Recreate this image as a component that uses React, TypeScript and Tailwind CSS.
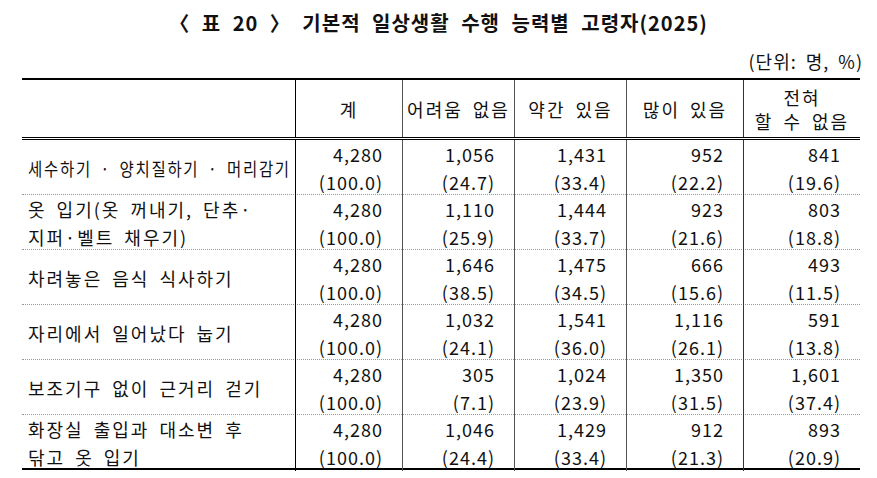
const rows = [
  { label: ["세수하기 · 양치질하기 · 머리감기"], squeeze: true, v: ["4,280", "1,056", "1,431", "952", "841"], p: ["100.0", "24.7", "33.4", "22.2", "19.6"] },
  { label: ["옷 입기(옷 꺼내기, 단추·", "지퍼·벨트 채우기)"], v: ["4,280", "1,110", "1,444", "923", "803"], p: ["100.0", "25.9", "33.7", "21.6", "18.8"] },
  { label: ["차려놓은 음식 식사하기"], v: ["4,280", "1,646", "1,475", "666", "493"], p: ["100.0", "38.5", "34.5", "15.6", "11.5"] },
  { label: ["자리에서 일어났다 눕기"], v: ["4,280", "1,032", "1,541", "1,116", "591"], p: ["100.0", "24.1", "36.0", "26.1", "13.8"] },
  { label: ["보조기구 없이 근거리 걷기"], v: ["4,280", "305", "1,024", "1,350", "1,601"], p: ["100.0", "7.1", "23.9", "31.5", "37.4"] },
  { label: ["화장실 출입과 대소변 후", "닦고 옷 입기"], v: ["4,280", "1,046", "1,429", "912", "893"], p: ["100.0", "24.4", "33.4", "21.3", "20.9"] },
];

const colBorder = ["border-l border-black", "border-l border-[#555]", "border-l border-[#555]", "border-l border-[#555]", "border-l border-[#333]"];

export default function App() {
  return (
    <div className="w-[877px] h-[478px] bg-white text-[#111] font-['Noto_Sans_CJK_KR',sans-serif] overflow-hidden">
      <div className="pt-[8px] text-center text-[20px] font-bold leading-[30px] tracking-[1px] [word-spacing:6px]">
        〈 표 20 〉 기본적 일상생활 수행 능력별 고령자(2025)
      </div>
      <div className="mt-[11px] pr-[14px] text-right text-[18px] leading-[24px] tracking-[1px] [word-spacing:4px]">
        (단위: 명, %)
      </div>
      <div className="ml-[22px] mt-[5px] w-[838px] border-t-2 border-black">
        {/* header */}
        <div className="grid grid-cols-[273px_107px_112px_112px_117px_117px] h-[60px] border-b-[3px] border-double border-black text-[18px] leading-[24px] tracking-[2px] [word-spacing:4px]">
          <div />
          <div className={`${colBorder[0]} flex items-center justify-center`}>계</div>
          <div className={`${colBorder[1]} flex items-center justify-center`}>어려움 없음</div>
          <div className={`${colBorder[2]} flex items-center justify-center`}>약간 있음</div>
          <div className={`${colBorder[3]} flex items-center justify-center`}>많이 있음</div>
          <div className={`${colBorder[4]} flex flex-col items-center justify-center`}>
            <span>전혀</span>
            <span>할 수 없음</span>
          </div>
        </div>
        {rows.map((r, i) => (
          <div
            key={i}
            className={`grid grid-cols-[273px_107px_112px_112px_117px_117px] h-[55px] text-[18px] leading-[28px] ${
              i < rows.length - 1 ? "border-b border-dotted border-[#999]" : "border-b-2 border-black"
            }`}
          >
            <div className="flex flex-col justify-center items-start pl-[6px] tracking-[2px] [word-spacing:4px]">
              {r.label.map((l, j) => (
                <span key={j} className={r.squeeze ? "whitespace-nowrap origin-left scale-x-[0.86]" : "whitespace-nowrap"}>
                  {l}
                </span>
              ))}
            </div>
            {r.v.map((v, j) => (
              <div key={j} className={`${colBorder[j]} flex flex-col justify-center items-end pr-[19px] tracking-[1px]`}>
                <span>{v}</span>
                <span>({r.p[j]})</span>
              </div>
            ))}
          </div>
        ))}
      </div>
    </div>
  );
}
